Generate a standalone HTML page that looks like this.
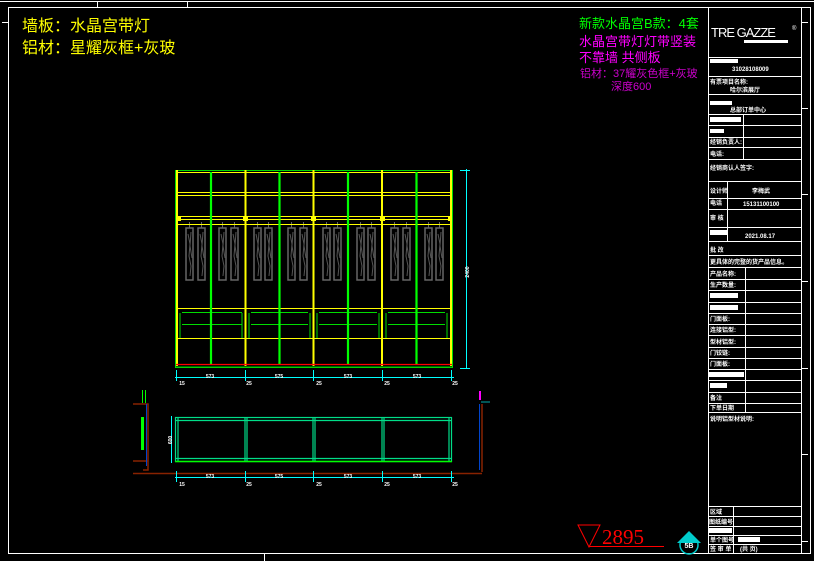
<!DOCTYPE html>
<html><head><meta charset="utf-8"><style>
html,body{margin:0;padding:0;background:#000;width:814px;height:561px;overflow:hidden}
svg{display:block}
text{font-family:"Liberation Sans","Noto Sans CJK SC",sans-serif}
.t{font-size:6px;fill:#fff;font-weight:bold}
.n{font-size:5px;fill:#fff;font-weight:bold}
</style></head><body>
<svg width="814" height="561" viewBox="0 0 814 561" xmlns="http://www.w3.org/2000/svg">
<defs>
<g id="cl"><path d="M0 0h7v52h-7z" fill="none" stroke="#666" stroke-width="1.5"/><path d="M2 6l2 10-1 12 2 10-1 10M5 4l-1 14 2 12" stroke="#555" fill="none"/><line x1="3.5" y1="-6" x2="3.5" y2="0" stroke="#666"/></g>
</defs>
<!-- frames -->
<g stroke="#fff" fill="none" stroke-width="1">
<line x1="0" y1="1.5" x2="814" y2="1.5"/>
<rect x="8.5" y="7.5" width="802" height="546"/>
<line x1="97.5" y1="2" x2="97.5" y2="7"/><line x1="187.5" y1="2" x2="187.5" y2="7"/>
<line x1="2" y1="22.5" x2="8" y2="22.5"/>
<line x1="708.5" y1="7" x2="708.5" y2="554"/>
<line x1="801.5" y1="7" x2="801.5" y2="554"/>
<line x1="801" y1="22.5" x2="808" y2="22.5"/><line x1="801" y1="108.5" x2="808" y2="108.5"/>
<line x1="801" y1="194.5" x2="808" y2="194.5"/><line x1="801" y1="281.5" x2="808" y2="281.5"/>
<line x1="801" y1="368.5" x2="808" y2="368.5"/><line x1="801" y1="454.5" x2="808" y2="454.5"/>
<line x1="801" y1="541.5" x2="808" y2="541.5"/>
<line x1="264.5" y1="554" x2="264.5" y2="561"/>
</g>
<!-- title block rows -->
<g stroke="#fff" stroke-width="1">
<line x1="708" y1="57.5" x2="801" y2="57.5"/><line x1="708" y1="76.5" x2="801" y2="76.5"/>
<line x1="708" y1="94.5" x2="801" y2="94.5"/><line x1="708" y1="114.5" x2="801" y2="114.5"/>
<line x1="708" y1="125.5" x2="801" y2="125.5"/><line x1="708" y1="137.5" x2="801" y2="137.5"/>
<line x1="708" y1="147.5" x2="801" y2="147.5"/><line x1="708" y1="159.5" x2="801" y2="159.5"/>
<line x1="708" y1="181.5" x2="801" y2="181.5"/><line x1="708" y1="198.5" x2="801" y2="198.5"/>
<line x1="708" y1="209.5" x2="801" y2="209.5"/><line x1="708" y1="227.5" x2="801" y2="227.5"/>
<line x1="708" y1="241.5" x2="801" y2="241.5"/><line x1="708" y1="255.5" x2="801" y2="255.5"/>
<line x1="708" y1="267.5" x2="801" y2="267.5"/><line x1="708" y1="279.5" x2="801" y2="279.5"/>
<line x1="708" y1="290.5" x2="801" y2="290.5"/><line x1="708" y1="302.5" x2="801" y2="302.5"/>
<line x1="708" y1="313.5" x2="801" y2="313.5"/><line x1="708" y1="324.5" x2="801" y2="324.5"/>
<line x1="708" y1="335.5" x2="801" y2="335.5"/><line x1="708" y1="347.5" x2="801" y2="347.5"/>
<line x1="708" y1="358.5" x2="801" y2="358.5"/><line x1="708" y1="369.5" x2="801" y2="369.5"/>
<line x1="708" y1="380.5" x2="801" y2="380.5"/><line x1="708" y1="392.5" x2="801" y2="392.5"/>
<line x1="708" y1="403.5" x2="801" y2="403.5"/><line x1="708" y1="412.5" x2="801" y2="412.5"/>
<line x1="708" y1="506.5" x2="801" y2="506.5"/><line x1="708" y1="516.5" x2="801" y2="516.5"/>
<line x1="708" y1="526.5" x2="801" y2="526.5"/><line x1="708" y1="535.5" x2="801" y2="535.5"/>
<line x1="708" y1="544.5" x2="801" y2="544.5"/>
<line x1="743.5" y1="114" x2="743.5" y2="159"/>
<line x1="727.5" y1="181" x2="727.5" y2="241"/>
<line x1="745.5" y1="267" x2="745.5" y2="412"/>
<line x1="733.5" y1="506" x2="733.5" y2="554"/>
</g>
<text x="711" y="37" style="font-size:13px;fill:#fff;letter-spacing:-1px">TRE GAZZE</text>
<text x="792" y="30" style="font-size:6px;fill:#fff">®</text>
<rect x="744" y="40" width="44" height="3" fill="#fff"/>
<g fill="#fff">
<rect x="710" y="59" width="28" height="4"/><rect x="710" y="101" width="22" height="4"/>
<rect x="710" y="117" width="31" height="5"/><rect x="710" y="129" width="14" height="4"/>
<rect x="710" y="230" width="17" height="5"/>
<rect x="710" y="293" width="28" height="5"/><rect x="710" y="305" width="28" height="5"/>
<rect x="708" y="372" width="36" height="5"/><rect x="710" y="383" width="17" height="5"/>
<rect x="708" y="528" width="24" height="5"/><rect x="738" y="537" width="22" height="5"/>
</g>
<g class="t">
<text x="732" y="71">31028108009</text>
<text x="710" y="84">有票项目名称:</text><text x="730" y="92">哈尔滨展厅</text>
<text x="730" y="112">总部订单中心</text>
<text x="710" y="144">经销负责人:</text><text x="710" y="156">电话:</text>
<text x="710" y="170">经销商认人签字:</text>
<text x="710" y="193">设计师</text><text x="752" y="193">李梅武</text>
<text x="710" y="205">电话</text><text x="743" y="206">15131100100</text>
<text x="710" y="220">审 核</text><text x="745" y="238">2021.08.17</text>
<text x="710" y="252">批 改</text>
<text x="710" y="264">更具体的完整的货产品信息。</text>
<text x="710" y="276">产品名称:</text><text x="710" y="287">生产数量:</text>
<text x="710" y="321">门面板:</text><text x="710" y="332">连接铝型:</text><text x="710" y="344">型材铝型:</text>
<text x="710" y="355">门铰链:</text><text x="710" y="366">门面板:</text>
<text x="710" y="400">备注</text><text x="710" y="410">下单日期</text>
<text x="710" y="421">说明铝型材说明:</text>
<text x="710" y="514">区域</text><text x="709" y="524">图纸编号</text>
<text x="710" y="542">单个图号</text><text x="710" y="551">签 审 单</text><text x="740" y="551">(共 页)</text>
</g>
<!-- top texts -->
<text x="22" y="31" style="font-size:16px;fill:#ff0">墙板：水晶宫带灯</text>
<text x="22" y="53" style="font-size:16px;fill:#ff0">铝材：星耀灰框+灰玻</text>
<text x="579" y="28" style="font-size:13px;fill:#0f0">新款水晶宫B款：4套</text>
<text x="579" y="46" style="font-size:13px;fill:#f0f">水晶宫带灯灯带竖装</text>
<text x="579" y="62" style="font-size:13px;fill:#f0f">不靠墙 共侧板</text>
<text x="580" y="77" style="font-size:11px;fill:#c0c">铝材：37耀灰色框+灰玻</text>
<text x="611" y="90" style="font-size:11px;fill:#c0c">深度600</text>
<!-- elevation -->
<g>
<use href="#cl" x="186" y="228"/><use href="#cl" x="198" y="228"/><use href="#cl" x="219" y="228"/><use href="#cl" x="231" y="228"/>
<use href="#cl" x="254" y="228"/><use href="#cl" x="265" y="228"/><use href="#cl" x="288" y="228"/><use href="#cl" x="300" y="228"/>
<use href="#cl" x="323" y="228"/><use href="#cl" x="334" y="228"/><use href="#cl" x="357" y="228"/><use href="#cl" x="368" y="228"/>
<use href="#cl" x="391" y="228"/><use href="#cl" x="403" y="228"/><use href="#cl" x="425" y="228"/><use href="#cl" x="436" y="228"/>
</g>
<g fill="none">
<g stroke="#ff0" stroke-width="1">
<line x1="176" y1="172.5" x2="452" y2="172.5"/><line x1="176" y1="192.5" x2="452" y2="192.5"/>
<line x1="176" y1="195.5" x2="452" y2="195.5"/><line x1="176" y1="216.5" x2="452" y2="216.5"/>
<line x1="176" y1="219.5" x2="452" y2="219.5"/><line x1="176" y1="224.5" x2="452" y2="224.5"/>
<line x1="176" y1="308.5" x2="452" y2="308.5"/><line x1="176" y1="338.5" x2="452" y2="338.5"/>
</g>
<g stroke="#0d0" stroke-width="1">
<rect x="175.5" y="170.5" width="277" height="197"/>
<path d="M182 312.5h60M251 312.5h57M319 312.5h58M388 312.5h57"/>
<path d="M182 324.5h60M251 324.5h57M319 324.5h58M388 324.5h57"/>
<line x1="180" y1="313" x2="180" y2="338"/><line x1="242" y1="313" x2="242" y2="338"/>
<line x1="249" y1="313" x2="249" y2="338"/><line x1="310" y1="313" x2="310" y2="338"/>
<line x1="317" y1="313" x2="317" y2="338"/><line x1="379" y1="313" x2="379" y2="338"/>
<line x1="386" y1="313" x2="386" y2="338"/><line x1="447" y1="313" x2="447" y2="338"/>
</g>
<g stroke="#ff0" stroke-width="2">
<line x1="177" y1="170" x2="177" y2="366"/><line x1="245.5" y1="170" x2="245.5" y2="366"/>
<line x1="313.5" y1="170" x2="313.5" y2="366"/><line x1="382" y1="170" x2="382" y2="366"/>
<line x1="451" y1="170" x2="451" y2="366"/>
</g>
<g stroke="#0f0" stroke-width="2.2">
<line x1="211" y1="172" x2="211" y2="364"/><line x1="279.5" y1="172" x2="279.5" y2="364"/>
<line x1="348" y1="172" x2="348" y2="364"/><line x1="416.5" y1="172" x2="416.5" y2="364"/>
</g>
<line x1="176" y1="364.5" x2="452" y2="364.5" stroke="#f00" stroke-width="1.2"/>
<line x1="176" y1="367" x2="452" y2="367" stroke="#0c0" stroke-width="1"/>
<g stroke="#0ff" stroke-width="1">
<line x1="466.5" y1="169" x2="466.5" y2="369"/><line x1="460" y1="170.5" x2="470" y2="170.5"/><line x1="460" y1="368.5" x2="470" y2="368.5"/>
<line x1="175" y1="377.5" x2="454" y2="377.5"/>
<line x1="176.5" y1="370" x2="176.5" y2="381"/><line x1="245.5" y1="370" x2="245.5" y2="381"/>
<line x1="313.5" y1="370" x2="313.5" y2="381"/><line x1="382.5" y1="370" x2="382.5" y2="381"/><line x1="451.5" y1="370" x2="451.5" y2="381"/>
</g>
</g>
<g fill="#ff0"><rect x="178" y="216" width="3" height="5"/><rect x="243" y="216" width="5" height="5"/><rect x="311" y="216" width="5" height="5"/><rect x="380" y="216" width="5" height="5"/><rect x="448" y="216" width="3" height="5"/></g>
<text transform="translate(469,272) rotate(-90)" class="n" text-anchor="middle">2400</text>
<g class="n" text-anchor="middle">
<text x="210" y="378">573</text><text x="279" y="378">575</text><text x="348" y="378">573</text><text x="417" y="378">573</text>
<text x="182" y="385">15</text><text x="249" y="385">25</text><text x="319" y="385">25</text><text x="387" y="385">25</text><text x="455" y="385">25</text>
</g>
<!-- plan -->
<g fill="none">
<g stroke="#0d8" stroke-width="1.2">
<rect x="175.5" y="417.5" width="276" height="44"/>
<line x1="175" y1="420.5" x2="452" y2="420.5"/><line x1="175" y1="458.5" x2="452" y2="458.5"/>
<line x1="245" y1="417" x2="245" y2="462"/><line x1="247" y1="417" x2="247" y2="462"/>
<line x1="313" y1="417" x2="313" y2="462"/><line x1="315" y1="417" x2="315" y2="462"/>
<line x1="382" y1="417" x2="382" y2="462"/><line x1="384" y1="417" x2="384" y2="462"/>
<line x1="178" y1="417" x2="178" y2="462"/><line x1="449" y1="417" x2="449" y2="462"/>
</g>
<line x1="175" y1="461.5" x2="452" y2="461.5" stroke="#0f0" stroke-width="1.5"/>
<line x1="133" y1="473.5" x2="482" y2="473.5" stroke="#820" stroke-width="1.5"/>
<path d="M133 404h15v66h-5M133 461h15M482 404v68" stroke="#820" stroke-width="1.5"/>
<line x1="146.5" y1="404" x2="146.5" y2="466" stroke="#04c"/>
<line x1="479.5" y1="404" x2="479.5" y2="470" stroke="#04c"/>
<line x1="481" y1="402" x2="490" y2="402" stroke="#0aa"/>
<g stroke="#0ff" stroke-width="1">
<line x1="171.5" y1="416" x2="171.5" y2="463"/>
<line x1="175" y1="477.5" x2="454" y2="477.5"/>
<line x1="176.5" y1="471" x2="176.5" y2="482"/><line x1="245.5" y1="471" x2="245.5" y2="482"/>
<line x1="313.5" y1="471" x2="313.5" y2="482"/><line x1="382.5" y1="471" x2="382.5" y2="482"/><line x1="451.5" y1="471" x2="451.5" y2="482"/>
</g>
</g>
<rect x="141" y="417" width="3" height="33" fill="#0f0"/>
<rect x="142" y="390" width="1" height="13" fill="#0f0"/><rect x="145" y="390" width="1" height="13" fill="#0f0"/>
<rect x="479" y="391" width="2" height="9" fill="#f0f"/>
<text transform="translate(172,440) rotate(-90)" class="n" text-anchor="middle">600</text>
<g class="n" text-anchor="middle">
<text x="210" y="478">573</text><text x="279" y="478">575</text><text x="348" y="478">573</text><text x="417" y="478">573</text>
<text x="182" y="486">15</text><text x="249" y="486">25</text><text x="319" y="486">25</text><text x="387" y="486">25</text><text x="455" y="486">25</text>
</g>
<!-- level mark -->
<path d="M578 525h22l-11 22z" fill="none" stroke="#f00" stroke-width="1"/>
<line x1="589" y1="546.5" x2="664" y2="546.5" stroke="#f00"/>
<text x="602" y="544" style="font-size:21px;fill:#f00;font-family:'Liberation Serif',serif">2895</text>
<circle cx="689" cy="545" r="9" fill="none" stroke="#0cc" stroke-width="1.5"/>
<path d="M677 543l12-12 12 12z" fill="#0cc"/>
<text x="689" y="548" class="n" text-anchor="middle" style="font-size:7px">5B</text>
</svg>
</body></html>
